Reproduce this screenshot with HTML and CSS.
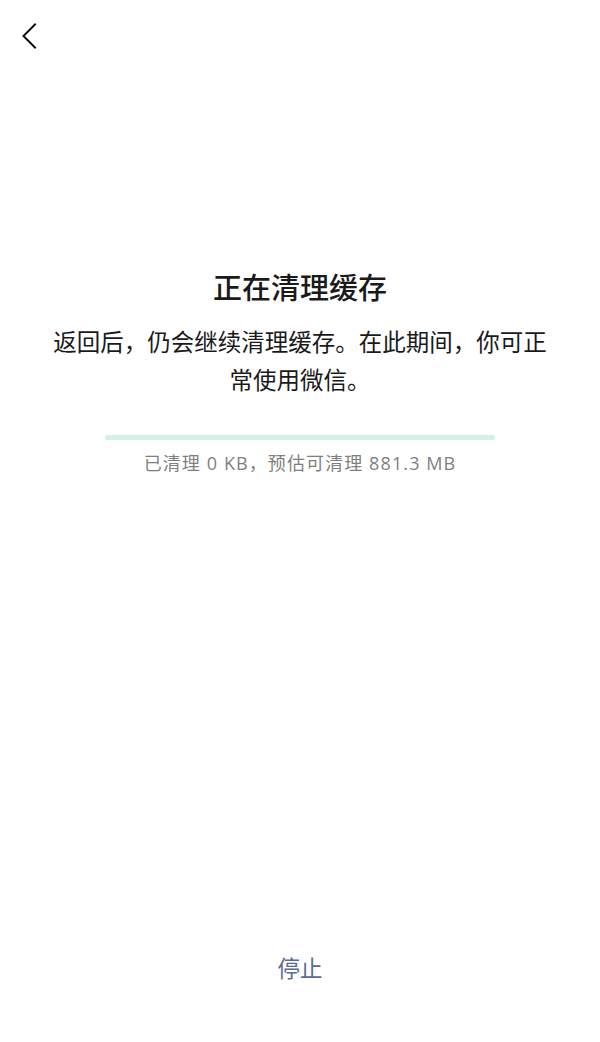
FILE: index.html
```html
<!DOCTYPE html>
<html lang="zh-CN">
<head>
<meta charset="utf-8">
<title>正在清理缓存</title>
<link rel="stylesheet" href="styles.css">
</head>
<body>
<div class="page">
  <header class="nav">
    <button class="back" aria-label="返回">
      <svg width="24" height="30" viewBox="0 0 24 30"><polyline points="17,3.5 5.5,15 17,26.5" fill="none" stroke="#111" stroke-width="2" stroke-linecap="square"/></svg>
    </button>
  </header>
  <main class="content">
    <h1 class="title">正在清理缓存</h1>
    <p class="desc">返回后，仍会继续清理缓存。在此期间，你可正常使用微信。</p>
    <div class="progress"><div class="progress-fill" style="width:0%"></div></div>
    <p class="caption">已清理 0 KB，预估可清理 881.3 MB</p>
  </main>
  <footer class="footer">
    <a class="stop">停止</a>
  </footer>
</div>
</body>
</html>
```
FILE: styles.css
```css
html, body {
  margin: 0;
  padding: 0;
  background: #ffffff;
}
.page {
  height: 1042px;
  display: flex;
  flex-direction: column;
  font-family: "Noto Sans CJK SC", "Noto Sans", sans-serif;
  color: #111111;
}
.nav {
  height: 70px;
  display: flex;
  align-items: flex-start;
  padding: 21px 0 0 18px;
  box-sizing: border-box;
}
.back {
  border: 0;
  background: none;
  padding: 0;
  margin: 0;
  width: 24px;
  height: 30px;
  display: block;
}
.back svg { display: block; }
.content {
  display: flex;
  flex-direction: column;
  align-items: center;
  padding: 196px 48px 0;
}
.title {
  margin: 0;
  font-size: 29px;
  line-height: 40px;
  font-weight: 500;
  text-align: center;
  color: #1a1a1a;
}
.desc {
  margin: 16px 0 0;
  font-size: 23.5px;
  line-height: 38px;
  text-align: center;
  color: #1a1a1a;
}
.progress {
  margin-top: 37px;
  width: 390px;
  height: 5px;
  border-radius: 3px;
  background: #d4f0e3;
  overflow: hidden;
}
.progress-fill {
  height: 100%;
  background: #07c160;
}
.caption {
  margin: 11px 0 0;
  font-family: "Open Sans", "Noto Sans CJK SC", sans-serif;
  font-size: 18px;
  line-height: 24px;
  letter-spacing: 1.1px;
  color: #7f7f7f;
  text-align: center;
}
.footer {
  margin-top: auto;
  padding-bottom: 60px;
  display: flex;
  justify-content: center;
}
.stop {
  font-size: 22.5px;
  line-height: 30px;
  color: #576b95;
  cursor: pointer;
}
```
